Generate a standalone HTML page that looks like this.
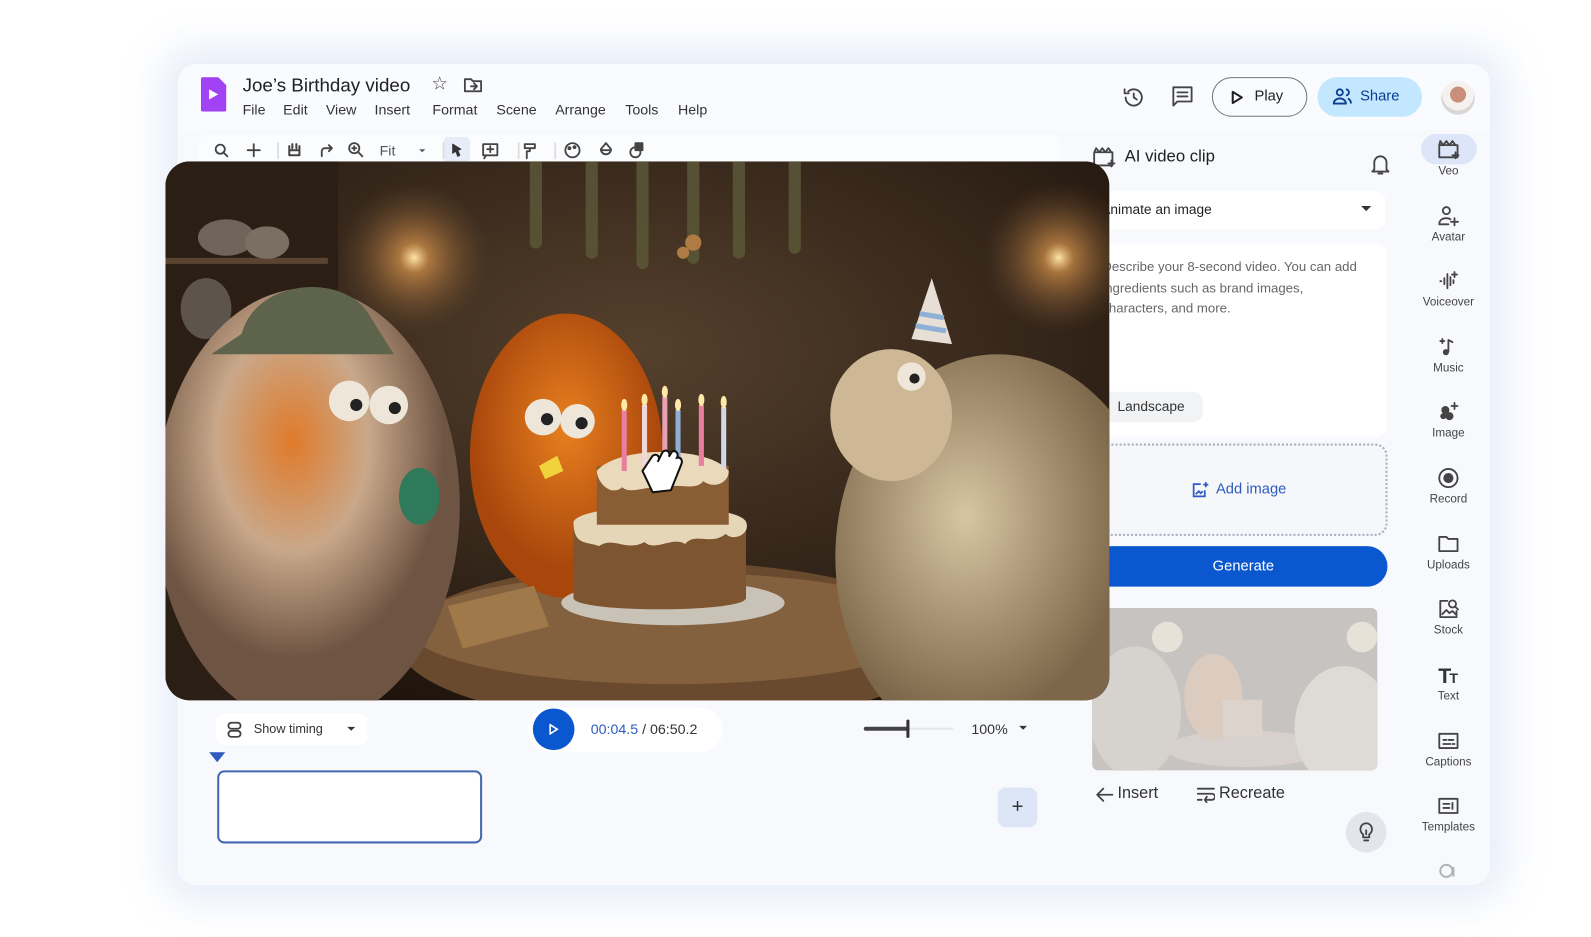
<!DOCTYPE html>
<html><head><meta charset="utf-8"><style>
*{box-sizing:border-box;margin:0;padding:0}
html,body{width:1591px;height:937px;overflow:hidden;background:#fff;font-family:"Liberation Sans",Arial,sans-serif;color:#1f1f1f}
#s{position:absolute;left:0;top:0;width:1564px;height:921px;transform:scale(1.015);transform-origin:0 0}
.a{position:absolute}
.win{left:175px;top:63px;width:1293px;height:809px;background:#f7f9fd;border-radius:18px;box-shadow:0 0 40px 16px rgba(200,212,240,.45)}
.menu span{position:absolute;top:100px;font-size:14px;color:#333}
.rail>div{position:absolute;width:70px;left:1392px;text-align:center;font-size:11.5px;color:#444}
.rail svg{display:block;margin:0 auto 4px}
.ic{fill:none;stroke:#444;stroke-width:1.8;stroke-linecap:round;stroke-linejoin:round}
</style></head><body><div id="s">
<div class="a win"></div>
<div class="a" style="left:176px;top:64px;width:1291px;height:64px;background:#fafbfe;border-radius:18px 18px 0 0"></div>
<!-- logo -->
<svg class="a" style="left:198px;top:76px" width="25" height="34" viewBox="0 0 25 34"><path d="M2 0h15l8 8v24a2 2 0 0 1-2 2H2a2 2 0 0 1-2-2V2a2 2 0 0 1 2-2z" fill="#a142f4"/><path d="M8 12l9 5-9 5z" fill="#fff"/></svg>
<div class="a" style="left:239px;top:73px;font-size:18.5px;color:#202124">Joe’s Birthday video</div>
<div class="a" style="left:425px;top:72px;font-size:18px;color:#444">☆</div>
<svg class="a" style="left:457px;top:76px" width="18" height="15" viewBox="0 0 18 15"><path class="ic" d="M1 2h6l2 2h8v10H1z M7 9h6 M10 6l3 3-3 3"/></svg>
<div class="menu"><span style="left:239px">File</span><span style="left:279px">Edit</span><span style="left:321px">View</span><span style="left:369px">Insert</span><span style="left:426px">Format</span><span style="left:489px">Scene</span><span style="left:547px">Arrange</span><span style="left:616px">Tools</span><span style="left:668px">Help</span></div>
<!-- top right -->
<svg class="a" style="left:1105px;top:84px" width="24" height="24" viewBox="0 0 24 24"><path class="ic" d="M4 12a8 8 0 1 0 2.5-5.8M3 4v4h4M12 8v4l3 2"/></svg>
<svg class="a" style="left:1154px;top:84px" width="22" height="22" viewBox="0 0 22 22"><path class="ic" d="M2 2h18v14H6l-4 4z M6 7h10M6 11h10"/></svg>
<div class="a" style="left:1194px;top:76px;width:94px;height:39px;border:1.5px solid #747775;border-radius:20px;font-size:14.5px;line-height:36px;padding-left:41px;color:#1f1f1f">Play</div>
<svg class="a" style="left:1213px;top:89px" width="12" height="14" viewBox="0 0 12 14"><path d="M1.5 1.5l9 5.5-9 5.5z" fill="none" stroke="#1f1f1f" stroke-width="2" stroke-linejoin="round"/></svg>
<div class="a" style="left:1298px;top:76px;width:103px;height:39px;background:#c2e7ff;border-radius:20px;font-size:14.5px;line-height:39px;padding-left:42px;color:#0b3d91">Share</div>
<svg class="a" style="left:1313px;top:87px" width="20" height="16" viewBox="0 0 20 16"><path d="M7 7a3 3 0 1 0 0-6 3 3 0 0 0 0 6zM1 15c0-3 3-5 6-5s6 2 6 5zM13 1a3 3 0 0 1 0 6M15 10c2 1 3 3 3 5" fill="none" stroke="#0b3d91" stroke-width="1.8"/></svg>
<div class="a" style="left:1420px;top:80px;width:33px;height:33px;border-radius:50%;background:radial-gradient(circle at 50% 40%,#c98f7a 0 30%,#f4f1ee 31% 60%,#d9d6d6 61%)"></div>
<!-- toolbar -->
<div class="a" style="left:195px;top:133px;width:850px;height:30px;background:#fbfcfe;border-radius:10px"></div>
<div class="a" style="left:437px;top:135px;width:26px;height:25px;background:#e6ecf8;border-radius:4px"></div>
<svg class="a" style="left:205px;top:138px" width="450" height="20" viewBox="0 0 450 20">
<g class="ic" stroke-width="1.6">
<circle cx="12" cy="9" r="4.5"/><path d="M15 12l4 4"/>
<path d="M45 4v12M39 10h12"/>
<path d="M69 3v15" stroke="#ddd"/>
<path d="M80 6v9h10V6M80 10h10M83 4v4M87 4v4" stroke-width="2"/>
<path d="M112 16v-5a3 3 0 0 1 3-3h7M119 5l3 3-3 3"/>
<circle cx="144" cy="8" r="5"/><path d="M148 12l4 4M144 6v4M142 8h4"/>
<path d="M232 3v15" stroke="#ddd"/>
<path d="M241 4l8 5-3 1 2 5-2 1-2-5-3 2z" fill="#333" stroke="#333" stroke-width="1"/>
<rect x="271" y="4" width="14" height="11"/><path d="M274 15l-2 3M275 9h6M278 6v6"/>
<path d="M306 3v15" stroke="#ddd"/>
<path d="M312 4h10v4h-10zM317 8v3h-3v7"/>
<path d="M342 3v15" stroke="#ddd"/>
<circle cx="359" cy="10" r="7"/><circle cx="356" cy="8" r="1"/><circle cx="361" cy="7" r="1"/>
<path d="M392 3l5 6a5 5 0 1 1-10 0z"/><path d="M388 10h8" />
<circle cx="421" cy="12" r="5"/><rect x="421" y="3" width="7" height="7" fill="#444"/>
</g>
<text x="169" y="15" font-size="14" fill="#555" font-family="Liberation Sans">Fit</text>
<path d="M208 9l3 3 3-3z" fill="#555"/>
</svg>
<!-- right panel -->
<svg class="a" style="left:1076px;top:144px" width="24" height="22" viewBox="0 0 24 22"><path class="ic" stroke="#333" d="M2 6h18v13H2zM2 6l2-4 3 4 3-4 3 4 3-4 3 4M19 14v6M16 17h6"/></svg>
<div class="a" style="left:1108px;top:145px;font-size:16.5px;color:#202124">AI video clip</div>
<svg class="a" style="left:1350px;top:151px" width="20" height="22" viewBox="0 0 20 22"><path class="ic" stroke="#333" d="M4 16V9a6 6 0 0 1 12 0v7l2 2H2zM8 20h4"/></svg>
<div class="a" style="left:1075px;top:188px;width:290px;height:38px;background:#fff;border-radius:10px"></div>
<div class="a" style="left:1085px;top:199px;font-size:13.5px;color:#222">Animate an image</div>
<svg class="a" style="left:1341px;top:203px" width="10" height="6"><path d="M0 0h10L5 5z" fill="#333"/></svg>
<div class="a" style="left:1075px;top:240px;width:291px;height:190px;background:#fff;border-radius:10px"></div>
<div class="a" style="left:1086px;top:253px;width:260px;font-size:13px;line-height:20.5px;color:#666">Describe your 8-second video. You can add ingredients such as brand images, characters, and more.</div>
<div class="a" style="left:1082px;top:386px;width:103px;height:30px;background:#f1f3f5;border-radius:10px;font-size:13.5px;line-height:30px;padding-left:19px;color:#333">Landscape</div>
<div class="a" style="left:1075px;top:437px;width:292px;height:91px;border:2px dotted #a8b0bd;border-radius:12px;background:#f5f7fb"></div>
<svg class="a" style="left:1174px;top:474px" width="17" height="17" viewBox="0 0 17 17"><path d="M13 9v6H2V3h7M4 13l3-3 2 2 2-2M14 1v5M11.5 3.5h5" fill="none" stroke="#2d5bbf" stroke-width="1.7"/></svg>
<div class="a" style="left:1198px;top:474px;font-size:14.5px;color:#2d5bbf">Add image</div>
<div class="a" style="left:1075px;top:538px;width:292px;height:40px;background:#0b57d0;border-radius:20px;color:#fff;font-size:14.5px;line-height:40px;text-align:center;padding-left:8px">Generate</div>
<svg class="a" style="left:1076px;top:599px;border-radius:6px;opacity:.55" width="281" height="160" viewBox="0 0 930 531" preserveAspectRatio="none">
<rect width="930" height="531" fill="#7d7062"/><ellipse cx="500" cy="460" rx="260" ry="60" fill="#a99480"/><ellipse cx="395" cy="290" rx="95" ry="140" fill="#b98a60"/><ellipse cx="140" cy="340" rx="150" ry="215" fill="#a89888"/><ellipse cx="820" cy="390" rx="160" ry="200" fill="#c0b4a2"/><rect x="425" y="300" width="130" height="120" fill="#b89e80"/><circle cx="245" cy="95" r="50" fill="#d8c6a4"/><circle cx="880" cy="95" r="50" fill="#d8c6a4"/></svg>
<div class="a" style="left:1076px;top:599px;width:281px;height:160px;background:rgba(235,237,241,.35);border-radius:6px"></div>
<svg class="a" style="left:1079px;top:775px" width="18" height="16" viewBox="0 0 18 16"><path class="ic" stroke="#333" d="M17 8H2M8 2L2 8l6 6"/></svg>
<div class="a" style="left:1101px;top:773px;font-size:16px;color:#333">Insert</div>
<svg class="a" style="left:1179px;top:775px" width="18" height="16" viewBox="0 0 18 16"><path class="ic" stroke="#333" d="M1 2h16M1 7h14a3 3 0 0 1 0 6H8M10 10l-2 3 2 3M1 13h4"/></svg>
<div class="a" style="left:1201px;top:773px;font-size:16px;color:#333">Recreate</div>
<div class="a" style="left:1326px;top:800px;width:40px;height:40px;border-radius:50%;background:#e2e6ec"></div>
<svg class="a" style="left:1339px;top:810px" width="14" height="20" viewBox="0 0 14 20"><path class="ic" stroke="#222" d="M7 1a6 6 0 0 0-3 11v3h6v-3A6 6 0 0 0 7 1zM5 18h4M7 8v4"/></svg>
<!-- video -->
<svg class="a" style="left:163px;top:159px;border-radius:24px;overflow:hidden" width="930" height="531" viewBox="0 0 930 531">
<defs>
<radialGradient id="bg" cx="50%" cy="35%" r="70%"><stop offset="0" stop-color="#55402c"/><stop offset=".6" stop-color="#35261a"/><stop offset="1" stop-color="#1e140c"/></radialGradient>
<radialGradient id="lamp"><stop offset="0" stop-color="#ffe6a8"/><stop offset=".2" stop-color="#d8944c" stop-opacity=".7"/><stop offset="1" stop-color="#6b4a2e" stop-opacity="0"/></radialGradient>
<radialGradient id="fur1" cx="45%" cy="35%"><stop offset="0" stop-color="#e07a2a"/><stop offset=".5" stop-color="#c9a88a"/><stop offset="1" stop-color="#6e5443"/></radialGradient>
<radialGradient id="fur2" cx="50%" cy="40%"><stop offset="0" stop-color="#e8801f"/><stop offset="1" stop-color="#a8460c"/></radialGradient>
<radialGradient id="sheep" cx="40%" cy="40%"><stop offset="0" stop-color="#d8c6a2"/><stop offset="1" stop-color="#7d674a"/></radialGradient>
</defs>
<rect width="930" height="531" fill="url(#bg)"/>
<rect x="0" y="0" width="170" height="531" fill="#2b1e14"/>
<rect x="0" y="95" width="160" height="6" fill="#5a4431"/>
<ellipse cx="60" cy="75" rx="28" ry="18" fill="#6f635a"/><ellipse cx="100" cy="80" rx="22" ry="16" fill="#7b6f63"/>
<ellipse cx="40" cy="145" rx="25" ry="30" fill="#5d544c"/>
<circle cx="245" cy="95" r="75" fill="url(#lamp)"/><circle cx="880" cy="95" r="75" fill="url(#lamp)"/>
<g stroke="#5d5a3a" stroke-width="12" stroke-linecap="round" opacity=".8"><path d="M365 0v80M420 0v90M470 0v100M520 0v95M565 0v90M620 0v85"/></g>
<g fill="#b07a45"><circle cx="520" cy="80" r="8"/><circle cx="510" cy="90" r="6"/></g>
<ellipse cx="500" cy="475" rx="270" ry="80" fill="#6a4a2e"/>
<ellipse cx="500" cy="460" rx="260" ry="55" fill="#83603e"/>
<ellipse cx="140" cy="340" rx="150" ry="215" fill="url(#fur1)"/>
<path d="M75 170c15-55 100-60 125-20l25 40H45z" fill="#5e634b"/>
<circle cx="181" cy="236" r="20" fill="#efe6da"/><circle cx="220" cy="240" r="19" fill="#efe6da"/>
<circle cx="188" cy="240" r="6" fill="#222"/><circle cx="226" cy="243" r="6" fill="#222"/>
<ellipse cx="250" cy="330" rx="20" ry="28" fill="#2f7a5a"/>
<ellipse cx="395" cy="290" rx="95" ry="140" fill="url(#fur2)"/>
<circle cx="372" cy="252" r="18" fill="#efe6da"/><circle cx="406" cy="256" r="17" fill="#efe6da"/>
<circle cx="376" cy="254" r="6" fill="#222"/><circle cx="410" cy="258" r="6" fill="#222"/>
<path d="M368 300l18-10 6 15-18 8z" fill="#f2d23c"/>
<ellipse cx="820" cy="390" rx="160" ry="200" fill="url(#sheep)"/>
<ellipse cx="715" cy="250" rx="60" ry="65" fill="#cdb794"/>
<circle cx="735" cy="212" r="14" fill="#efe6da"/><circle cx="738" cy="214" r="5" fill="#222"/>
<path d="M735 175l20-60 20 65z" fill="#e7dfd5"/><path d="M743 150l24 4M739 162l30 5" stroke="#8fb0d6" stroke-width="5"/>
<ellipse cx="500" cy="435" rx="110" ry="22" fill="#c9c2b6"/>
<path d="M402 355h170v75c0 15-170 15-170 0z" fill="#7d5530"/>
<path d="M402 355c10-20 160-20 170 0 5 12-12 20-20 12-15 12-30-2-40 10-12-8-30 8-40-2-18 10-30-6-45 4-12-5-25 0-25-24z" fill="#e6d6b8"/>
<path d="M425 300h130v58H425z" fill="#8a5e34"/>
<path d="M425 305c20-25 110-25 130 0 0 12-15 18-25 10-10 12-30-2-40 10-10-10-30 5-40-4-12 10-25-6-25-16z" fill="#ead9bb"/>
<g stroke-width="5"><path d="M452 245v60" stroke="#e97ea0"/><path d="M472 240v60" stroke="#f0d8d8"/><path d="M492 232v65" stroke="#e9a0b0"/><path d="M505 245v55" stroke="#8fb0d6"/><path d="M528 240v60" stroke="#e97ea0"/><path d="M550 242v60" stroke="#cfd9e8"/></g>
<g fill="#ffe9a8"><ellipse cx="452" cy="240" rx="3" ry="6"/><ellipse cx="472" cy="235" rx="3" ry="6"/><ellipse cx="492" cy="227" rx="3" ry="6"/><ellipse cx="505" cy="240" rx="3" ry="6"/><ellipse cx="528" cy="235" rx="3" ry="6"/><ellipse cx="550" cy="237" rx="3" ry="6"/></g>
<path d="M278 438l85-20 15 40-85 22z" fill="#a0794a"/>
<path d="M470 305l10-15c5-3 8 2 5 6l5-10c4-3 8 1 6 5l3-5c4-2 7 2 5 6 4-1 6 3 4 7l-10 25-18 2z" fill="#fff" stroke="#111" stroke-width="2"/>
</svg>
<!-- rail -->
<div class="a" style="left:1400px;top:132px;width:55px;height:30px;background:#dde6f8;border-radius:15px"></div>
<div class="rail">
<div style="top:137px"><svg width="24" height="22" viewBox="0 0 24 22"><path class="ic" stroke="#333" d="M3 6h18v12H3zM3 6l1-4 3 4 3-4 3 4 3-4 3 4M19 13v6M16 16h6"/></svg>Veo</div>
<div style="top:202px"><svg width="22" height="22" viewBox="0 0 22 22"><path class="ic" d="M9 9a3.5 3.5 0 1 0 0-7 3.5 3.5 0 0 0 0 7zM2 19c0-4 3-6 7-6 2 0 3 .3 4 1M2 19h9M17 13v7M13.5 16.5h7"/></svg>Avatar</div>
<div style="top:266px"><svg width="22" height="22" viewBox="0 0 22 22"><path class="ic" d="M3 11h1M7 8v6M10 4v14M13 7v8M16 10v3M17 2v5M14.5 4.5h5"/></svg>Voiceover</div>
<div style="top:331px"><svg width="22" height="22" viewBox="0 0 22 22"><path class="ic" d="M11 4v11"/><circle cx="8.5" cy="16" r="3" fill="#444"/><path class="ic" d="M11 4l4 2M5 3v4M3 5h4"/></svg>Music</div>
<div style="top:395px"><svg width="22" height="22" viewBox="0 0 22 22"><circle cx="8" cy="9" r="4" fill="#444"/><circle cx="12" cy="15" r="4" fill="#444"/><circle cx="6" cy="15" r="3" fill="#444"/><path class="ic" d="M17 2v6M14 5h6"/></svg>Image</div>
<div style="top:460px"><svg width="22" height="22" viewBox="0 0 22 22"><circle cx="11" cy="11" r="9" class="ic" stroke-width="2"/><circle cx="11" cy="11" r="5" fill="#444"/></svg>Record</div>
<div style="top:525px"><svg width="22" height="22" viewBox="0 0 22 22"><path class="ic" d="M2 4h7l2 2h9v12H2z"/></svg>Uploads</div>
<div style="top:589px"><svg width="22" height="22" viewBox="0 0 22 22"><path class="ic" d="M10 3H3v16h16v-6M5 16l4-4 3 3 3-2 3 3"/><circle cx="15" cy="6" r="3.5" class="ic"/><path class="ic" d="M17.5 8.5l3 3"/></svg>Stock</div>
<div style="top:654px"><svg width="24" height="22" viewBox="0 0 24 22"><text x="2" y="19" font-size="21" font-weight="bold" fill="#333" font-family="Liberation Sans">T</text><text x="13" y="19" font-size="14" font-weight="bold" fill="#333" font-family="Liberation Sans">T</text></svg>Text</div>
<div style="top:719px"><svg width="22" height="22" viewBox="0 0 22 22"><path class="ic" d="M2 4h18v14H2zM6 10h3M11 10h5M6 14h7M15 14h2"/></svg>Captions</div>
<div style="top:783px"><svg width="22" height="22" viewBox="0 0 22 22"><path class="ic" d="M2 4h18v14H2zM6 9h6M6 13h6M15 8v6"/></svg>Templates</div>
<div style="top:847px;opacity:.4"><svg width="22" height="22" viewBox="0 0 22 22"><circle cx="9" cy="11" r="6" class="ic"/><path class="ic" d="M16 8v8"/></svg></div>
</div>
<!-- bottom -->
<div class="a" style="left:213px;top:703px;width:149px;height:31px;background:#fff;border-radius:8px"></div>
<svg class="a" style="left:223px;top:711px" width="16" height="16" viewBox="0 0 16 16"><rect x="2" y="1" width="12" height="6" rx="3" class="ic"/><rect x="2" y="9" width="12" height="6" rx="3" class="ic"/></svg>
<div class="a" style="left:250px;top:711px;font-size:12.5px;color:#333">Show timing</div>
<svg class="a" style="left:342px;top:716px" width="8" height="5"><path d="M0 0h8L4 4z" fill="#333"/></svg>
<div class="a" style="left:520px;top:697px;width:192px;height:44px;background:#fff;border-radius:22px"></div>
<div class="a" style="left:525px;top:698px;width:41px;height:41px;background:#0b57d0;border-radius:50%"></div>
<svg class="a" style="left:541px;top:713px" width="10" height="11"><path d="M1 1l7 4.5L1 10z" fill="none" stroke="#fff" stroke-width="1.6"/></svg>
<div class="a" style="left:582px;top:710px;font-size:14px;color:#333"><span style="color:#2d5bbf">00:04.5</span> / 06:50.2</div>
<div class="a" style="left:851px;top:716px;width:44px;height:4px;background:#444;border-radius:2px"></div>
<div class="a" style="left:895px;top:717px;width:44px;height:2px;background:#e3e6ea"></div>
<div class="a" style="left:893px;top:709px;width:3px;height:18px;background:#333;border-radius:1px"></div>
<div class="a" style="left:957px;top:710px;font-size:14px;color:#333">100%</div>
<svg class="a" style="left:1004px;top:715px" width="8" height="5"><path d="M0 0h8L4 4z" fill="#333"/></svg>
<svg class="a" style="left:206px;top:741px" width="16" height="11"><path d="M0 0h16L8 10z" fill="#2d5bbf"/></svg>
<div class="a" style="left:214px;top:759px;width:261px;height:72px;border:2px solid #4467b0;border-radius:7px;background:#fff"></div>
<div class="a" style="left:983px;top:776px;width:39px;height:39px;background:#dde6f7;border-radius:8px;font-size:20px;text-align:center;line-height:38px;color:#333">+</div>
</div></body></html>
